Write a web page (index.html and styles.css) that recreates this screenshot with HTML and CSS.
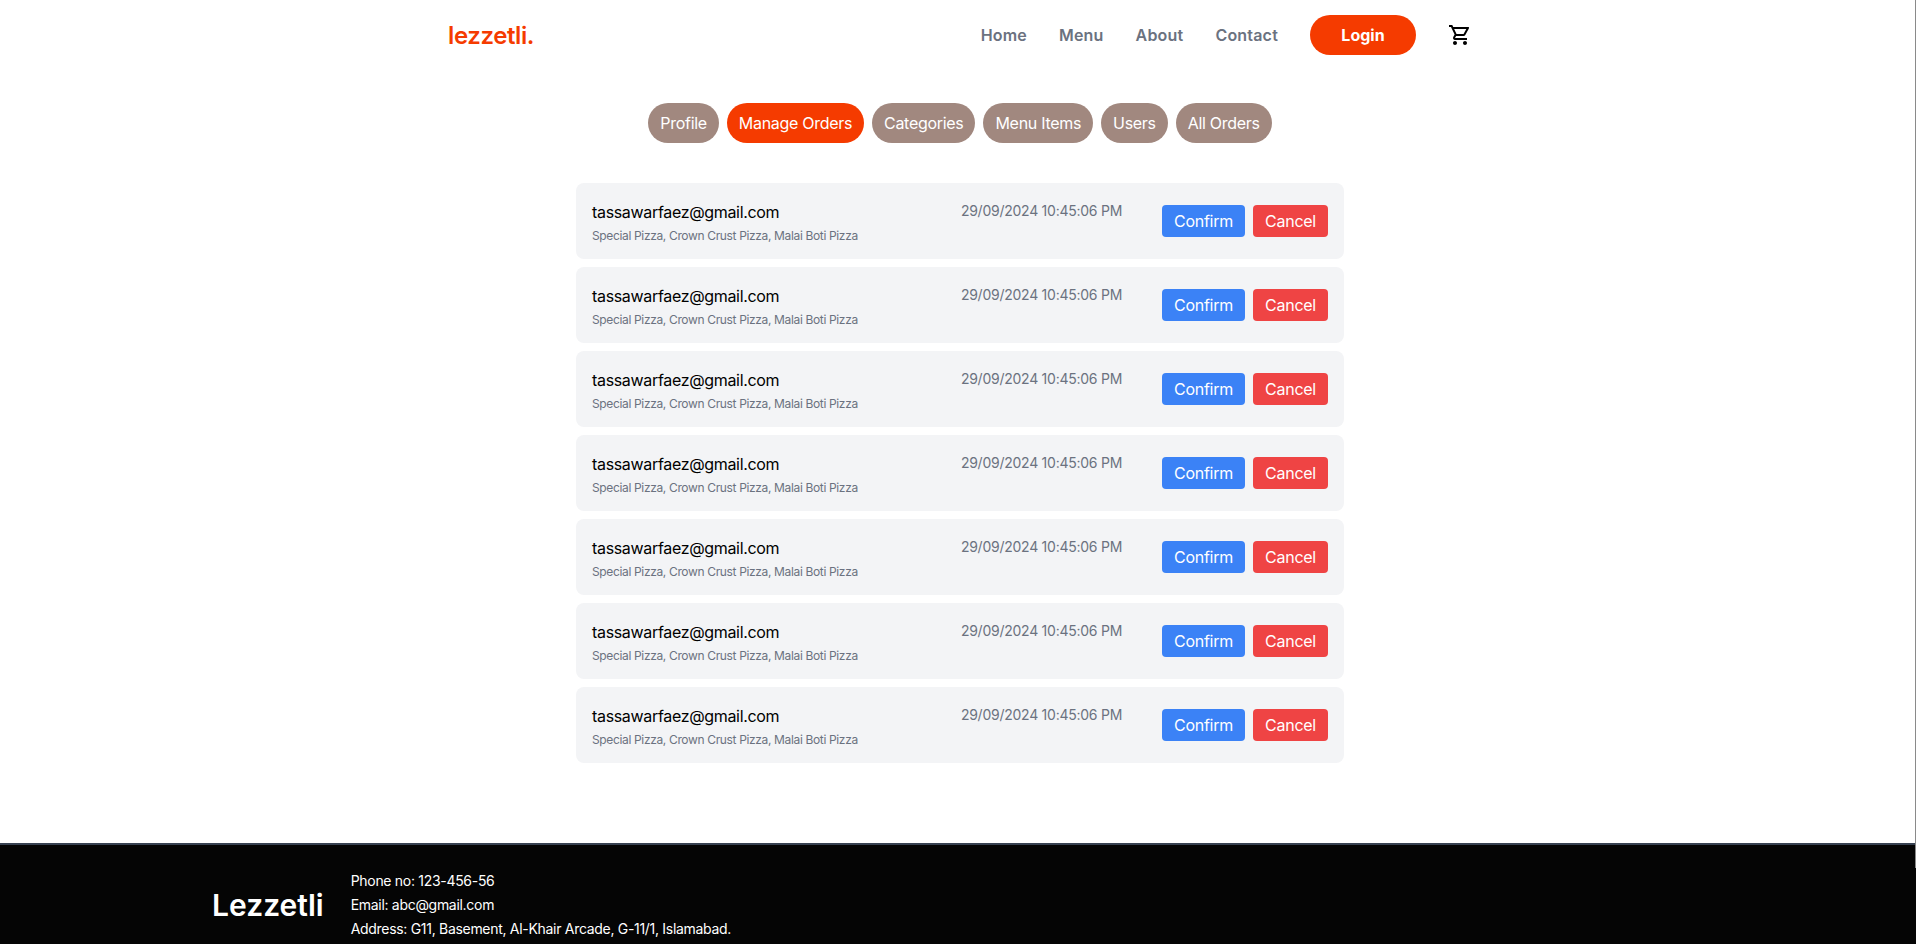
FILE: index.html
```html
<!DOCTYPE html>
<html>
<head>
    <title>Lezzetli</title>
    <link rel="stylesheet" href="styles.css">
</head>
<body>
    <header class="navbar">
        <a class="logo" href="#">lezzetli.</a>
        <nav class="nav-links">
            <a href="#">Home</a>
            <a href="#">Menu</a>
            <a href="#">About</a>
            <a href="#">Contact</a>
        </nav>
        <button class="login-btn" type="button">Login</button>
        <a class="cart" href="#" aria-label="Cart">
            <svg width="24" height="24" viewBox="0 0 24 24" fill="currentColor">
                <path d="M15.55 13c.75 0 1.41-.41 1.75-1.03l3.58-6.49A.996.996 0 0 0 20.01 4H5.21l-.94-2H1v2h2l3.6 7.59-1.35 2.44C4.52 15.37 5.48 17 7 17h12v-2H7l1.1-2h7.45zM6.16 6h12.15l-2.76 5H8.53L6.16 6zM7 18c-1.1 0-1.99.9-1.99 2S5.900 22 7 22s2-.9 2-2-.9-2-2-2zm10 0c-1.100 0-1.990.9-1.990 2s.89 2 1.990 2 2-.9 2-2-.9-2-2-2z"/>
            </svg>
        </a>
    </header>

    <main>
        <div class="tabs">
            <button class="tab" type="button">Profile</button>
            <button class="tab tab-active" type="button">Manage Orders</button>
            <button class="tab" type="button">Categories</button>
            <button class="tab" type="button">Menu Items</button>
            <button class="tab" type="button">Users</button>
            <button class="tab" type="button">All Orders</button>
        </div>

        <div class="orders">
            <div class="order">
                <div class="order-info">
                    <p class="order-email">tassawarfaez@gmail.com</p>
                    <p class="order-items">Special Pizza, Crown Crust Pizza, Malai Boti Pizza</p>
                </div>
                <p class="order-date">29/09/2024 10:45:06 PM</p>
                <div class="order-actions">
                    <button class="btn btn-confirm" type="button">Confirm</button>
                    <button class="btn btn-cancel" type="button">Cancel</button>
                </div>
            </div>
            <div class="order">
                <div class="order-info">
                    <p class="order-email">tassawarfaez@gmail.com</p>
                    <p class="order-items">Special Pizza, Crown Crust Pizza, Malai Boti Pizza</p>
                </div>
                <p class="order-date">29/09/2024 10:45:06 PM</p>
                <div class="order-actions">
                    <button class="btn btn-confirm" type="button">Confirm</button>
                    <button class="btn btn-cancel" type="button">Cancel</button>
                </div>
            </div>
            <div class="order">
                <div class="order-info">
                    <p class="order-email">tassawarfaez@gmail.com</p>
                    <p class="order-items">Special Pizza, Crown Crust Pizza, Malai Boti Pizza</p>
                </div>
                <p class="order-date">29/09/2024 10:45:06 PM</p>
                <div class="order-actions">
                    <button class="btn btn-confirm" type="button">Confirm</button>
                    <button class="btn btn-cancel" type="button">Cancel</button>
                </div>
            </div>
            <div class="order">
                <div class="order-info">
                    <p class="order-email">tassawarfaez@gmail.com</p>
                    <p class="order-items">Special Pizza, Crown Crust Pizza, Malai Boti Pizza</p>
                </div>
                <p class="order-date">29/09/2024 10:45:06 PM</p>
                <div class="order-actions">
                    <button class="btn btn-confirm" type="button">Confirm</button>
                    <button class="btn btn-cancel" type="button">Cancel</button>
                </div>
            </div>
            <div class="order">
                <div class="order-info">
                    <p class="order-email">tassawarfaez@gmail.com</p>
                    <p class="order-items">Special Pizza, Crown Crust Pizza, Malai Boti Pizza</p>
                </div>
                <p class="order-date">29/09/2024 10:45:06 PM</p>
                <div class="order-actions">
                    <button class="btn btn-confirm" type="button">Confirm</button>
                    <button class="btn btn-cancel" type="button">Cancel</button>
                </div>
            </div>
            <div class="order">
                <div class="order-info">
                    <p class="order-email">tassawarfaez@gmail.com</p>
                    <p class="order-items">Special Pizza, Crown Crust Pizza, Malai Boti Pizza</p>
                </div>
                <p class="order-date">29/09/2024 10:45:06 PM</p>
                <div class="order-actions">
                    <button class="btn btn-confirm" type="button">Confirm</button>
                    <button class="btn btn-cancel" type="button">Cancel</button>
                </div>
            </div>
            <div class="order">
                <div class="order-info">
                    <p class="order-email">tassawarfaez@gmail.com</p>
                    <p class="order-items">Special Pizza, Crown Crust Pizza, Malai Boti Pizza</p>
                </div>
                <p class="order-date">29/09/2024 10:45:06 PM</p>
                <div class="order-actions">
                    <button class="btn btn-confirm" type="button">Confirm</button>
                    <button class="btn btn-cancel" type="button">Cancel</button>
                </div>
            </div>
        </div>
    </main>

    <footer class="footer">
        <h2 class="footer-logo">Lezzetli</h2>
        <div class="footer-info">
            <p>Phone no: 123-456-56</p>
            <p>Email: abc@gmail.com</p>
            <p>Address: G11, Basement, Al-Khair Arcade, G-11/1, Islamabad.</p>
        </div>
    </footer>

    <div class="scroll-thumb"></div>
</body>
</html>
```

FILE: styles.css
```css
* {
    box-sizing: border-box;
}
html {
    height: 100%;
    overflow: hidden;
}
body {
    margin: 0;
    width: 1920px; /* page is a little wider than the window */
    height: 100%;
    font-family: Inter, "Liberation Sans", sans-serif;
    background-color: #fff;
    display: flex;
    flex-direction: column;
}
p, h2 {
    margin: 0;
}
a {
    text-decoration: none;
}
button {
    font-family: inherit;
    border: 0;
    color: #fff;
}

/* Top bar */
.navbar {
    width: 1024px;
    height: 70px;
    margin: 0 auto;
    display: flex;
    align-items: center;
}
.logo {
    font-size: 24px;
    font-weight: 600;
    letter-spacing: -0.4px;
    color: #f53b00;
    margin-right: auto;
}
.nav-links {
    display: flex;
    gap: 32px;
}
.nav-links a {
    font-size: 16px;
    font-weight: 600;
    letter-spacing: 0.2px;
    color: #6b7280;
}
.login-btn {
    width: 106px;
    height: 40px;
    margin-left: 32px;
    border-radius: 20px;
    font-size: 16px;
    font-weight: 700;
    background-color: #f53b00;
}
.cart {
    display: flex;
    margin-left: 32px;
    color: #000;
}

/* Dashboard tabs */
.tabs {
    display: flex;
    justify-content: center;
    gap: 8px;
    margin-top: 33px;
}
.tab {
    height: 40px;
    padding: 0 12px;
    border-radius: 20px;
    font-size: 16px;
    letter-spacing: -0.3px;
    background-color: #a1887f;
}
.tab-active {
    background-color: #f53b00;
}

/* Orders list */
.orders {
    width: 768px;
    margin: 40px auto 0;
    display: flex;
    flex-direction: column;
    gap: 8px;
}
.order {
    height: 76px;
    padding: 16px;
    display: flex;
    justify-content: space-between;
    align-items: center;
    background-color: #f3f4f6;
    border-radius: 8px;
}
.order-info {
    width: 329px;
    margin-top: 1px;
}
.order-email {
    font-size: 16px;
    line-height: 24px;
    letter-spacing: -0.33px;
    color: #000;
}
.order-items {
    font-size: 12px;
    line-height: 16px;
    letter-spacing: -0.35px;
    margin-top: 4px;
    color: #6b7280;
}
.order-date {
    align-self: flex-start;
    margin-top: 2px;
    font-size: 14px;
    line-height: 20px;
    letter-spacing: -0.25px;
    color: #6b7280;
}
.order-actions {
    display: flex;
    gap: 8px;
}
.btn {
    height: 32px;
    padding: 0 12px;
    border-radius: 4px;
    font-size: 16px;
    letter-spacing: -0.25px;
}
.btn-confirm {
    background-color: #3b82f6;
}
.btn-cancel {
    background-color: #ef4444;
}

/* Footer */
.footer {
    margin-top: auto;
    height: 101px;
    padding: 20px 0 0 212px;
    display: flex;
    align-items: center;
    gap: 27px;
    background-color: #050505;
    border-top: 2px solid #374151;
    color: #fff;
}
.footer-logo {
    font-size: 30px;
    font-weight: 600;
}
.footer-info {
    font-size: 14px;
    line-height: 24px;
    letter-spacing: -0.3px;
}

/* Sliver of the page scrollbar at the window edge */
.scroll-thumb {
    position: fixed;
    top: 0;
    right: 0;
    width: 1px;
    height: 868px;
    background-color: #8a8a8a;
}
```
